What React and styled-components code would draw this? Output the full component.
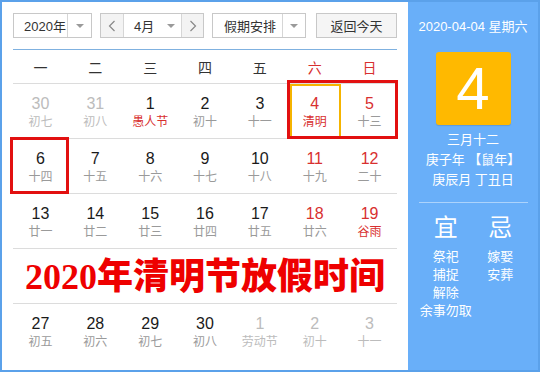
import React from "react";
import styled, { createGlobalStyle } from "styled-components";

const GlobalStyle = createGlobalStyle`
  html, body { margin: 0; padding: 0; width: 540px; height: 372px; overflow: hidden; background: #fff; }
  body { font-family: "Liberation Sans", "Noto Sans CJK SC", sans-serif; }
`;

const Frame = styled.div`
  width: 540px;
  height: 372px;
  box-sizing: border-box;
  border: 2px solid #5ba1ea;
  display: flex;
  background: #fff;
`;

const Main = styled.div`
  flex: 1;
  min-width: 0;
  padding: 11px 11px 0 11px;
`;

const Toolbar = styled.div`
  display: flex;
  height: 25px;
`;

const Box = styled.div`
  display: flex;
  box-sizing: border-box;
  border: 1px solid #c8c8c8;
  width: ${(p) => p.$w}px;
  margin-right: ${(p) => p.$mr || 0}px;
  background: ${(p) => p.$bg || "#fff"};
  justify-content: ${(p) => (p.$center ? "center" : "flex-start")};
  align-items: center;
  font-size: 13px;
  color: #333;
  white-space: nowrap;
`;

const Label = styled.div`
  flex: 1;
  min-width: 0;
  height: 100%;
  display: flex;
  align-items: center;
  padding-left: ${(p) => p.$pl}px;
  font-size: 13px;
  color: #333;
  white-space: nowrap;
`;

const Caret = styled.div`
  flex: none;
  width: ${(p) => p.$w}px;
  height: 100%;
  box-sizing: border-box;
  border-left: ${(p) => (p.$divider ? "1px solid #d6d6d6" : "none")};
  display: flex;
  align-items: center;
  justify-content: center;
`;

const Tri = styled.span`
  width: 0;
  height: 0;
  border-top: 4px solid #9a9a9a;
  border-left: 4px solid transparent;
  border-right: 4px solid transparent;
`;

const NavBtn = styled.div`
  flex: none;
  width: ${(p) => p.$w}px;
  height: 100%;
  box-sizing: border-box;
  background: #f3f3f3;
  border-left: ${(p) => (p.$side === "right" ? "1px solid #d6d6d6" : "none")};
  border-right: ${(p) => (p.$side === "left" ? "1px solid #d6d6d6" : "none")};
  display: flex;
  align-items: center;
  justify-content: center;
`;

const WeekHeader = styled.div`
  margin-top: 11px;
  height: 35px;
  box-sizing: border-box;
  border-top: 1px solid #7fb1e0;
  border-bottom: 1px solid #dcdcdc;
  display: grid;
  grid-template-columns: repeat(7, 1fr);
  align-items: center;
`;

const WeekName = styled.div`
  text-align: center;
  font-size: 14px;
  color: ${(p) => (p.$red ? "#d8302f" : "#333")};
`;

const Grid = styled.div`
  position: relative;
`;

const WeekRow = styled.div`
  display: grid;
  grid-template-columns: repeat(7, 1fr);
  height: 55px;
  box-sizing: border-box;
  border-bottom: ${(p) => (p.$last ? "none" : "1px solid #dcdcdc")};
`;

const Cell = styled.div`
  position: relative;
  display: flex;
  flex-direction: column;
  align-items: center;
  padding-top: 10px;
  &::after {
    content: "";
    display: ${(p) => (p.$today ? "block" : "none")};
    position: absolute;
    top: 0;
    bottom: -1px;
    left: 3px;
    right: 1px;
    border: 2px solid #f5b400;
  }
`;

const DayNum = styled.div`
  font-size: 16px;
  line-height: 20px;
  color: ${(p) => p.$color};
`;

const Lunar = styled.div`
  font-size: 12px;
  line-height: 16px;
  color: ${(p) => p.$color};
`;

const BannerRow = styled.div`
  height: 55px;
  box-sizing: border-box;
  border-bottom: 1px solid #dcdcdc;
  display: flex;
  align-items: center;
  justify-content: center;
`;

const BannerText = styled.div`
  font-family: "Liberation Serif", "Noto Sans CJK SC", serif;
  font-weight: 900;
  font-size: 36px;
  line-height: 40px;
  color: #ee0000;
  padding-top: 2px;
`;

const Mark = styled.div`
  position: absolute;
  left: ${(p) => p.$left};
  top: ${(p) => p.$top}px;
  width: ${(p) => p.$width};
  height: ${(p) => p.$height}px;
  box-sizing: border-box;
  border: 3px solid #e21010;
  pointer-events: none;
`;

const Side = styled.div`
  width: 130px;
  background: #69aff9;
  color: #fff;
  display: flex;
  flex-direction: column;
  align-items: center;
  padding-top: 15px;
  box-sizing: border-box;
`;

const DateLine = styled.div`
  font-size: 13px;
  line-height: 20px;
`;

const BigDay = styled.div`
  margin-top: 15px;
  width: 75px;
  height: 73px;
  background: #ffb900;
  border-radius: 3px;
  box-shadow: 0 1px 1px rgba(0, 0, 0, 0.12);
  display: flex;
  align-items: center;
  justify-content: center;
  font-size: 60px;
  line-height: 1;
  color: #fff;
`;

const LunarInfo = styled.div`
  margin-top: 5px;
  font-size: 13px;
  line-height: 20px;
  text-align: center;
`;

const Divider = styled.div`
  margin-top: 12px;
  width: 109px;
  height: 1px;
  background: rgba(255, 255, 255, 0.45);
`;

const YiJi = styled.div`
  margin-top: 10px;
  width: 109px;
  display: grid;
  grid-template-columns: 1fr 1fr;
`;

const YiCol = styled.div`
  display: flex;
  flex-direction: column;
  align-items: center;
`;

const YiHead = styled.div`
  font-size: 24px;
  line-height: 30px;
  margin-bottom: 5px;
`;

const YiItem = styled.div`
  font-size: 13px;
  line-height: 18px;
  white-space: nowrap;
`;

const Chevron = ({ dir }) => (
  <svg width="8" height="12" viewBox="0 0 8 12">
    <path
      d={dir === "left" ? "M6.5 1 L1.5 6 L6.5 11" : "M1.5 1 L6.5 6 L1.5 11"}
      fill="none"
      stroke="#888"
      strokeWidth="1.2"
    />
  </svg>
);

const C = { norm: "#1a1a1a", red: "#d8302f", gray: "#bcbcbc", lunar: "#9a9a9a" };

const mk = (n, l, o = {}) => ({ n, l, ...o });

const weeks = [
  [
    mk("30", "初七", { g: true }),
    mk("31", "初八", { g: true }),
    mk("1", "愚人节", { lr: true }),
    mk("2", "初十"),
    mk("3", "十一"),
    mk("4", "清明", { r: true, lr: true, today: true }),
    mk("5", "十三", { r: true }),
  ],
  [
    mk("6", "十四"),
    mk("7", "十五"),
    mk("8", "十六"),
    mk("9", "十七"),
    mk("10", "十八"),
    mk("11", "十九", { r: true }),
    mk("12", "二十", { r: true }),
  ],
  [
    mk("13", "廿一"),
    mk("14", "廿二"),
    mk("15", "廿三"),
    mk("16", "廿四"),
    mk("17", "廿五"),
    mk("18", "廿六", { r: true }),
    mk("19", "谷雨", { r: true, lr: true }),
  ],
  "banner",
  [
    mk("27", "初五"),
    mk("28", "初六"),
    mk("29", "初七"),
    mk("30", "初八"),
    mk("1", "劳动节", { g: true }),
    mk("2", "初十", { g: true }),
    mk("3", "十一", { g: true }),
  ],
];

const weekNames = ["一", "二", "三", "四", "五", "六", "日"];

export default function App() {
  return (
    <>
      <GlobalStyle />
      <Frame>
        <Main>
          <Toolbar>
            <Box $w={79} $mr={8}>
              <Label $pl={10}>2020年</Label>
              <Caret $w={24} $divider>
                <Tri />
              </Caret>
            </Box>
            <Box $w={104} $mr={8}>
              <NavBtn $w={23} $side="left">
                <Chevron dir="left" />
              </NavBtn>
              <Label $pl={10}>4月</Label>
              <Caret $w={20}>
                <Tri />
              </Caret>
              <NavBtn $w={22} $side="right">
                <Chevron dir="right" />
              </NavBtn>
            </Box>
            <Box $w={94} $mr={10}>
              <Label $pl={11}>假期安排</Label>
              <Caret $w={23} $divider>
                <Tri />
              </Caret>
            </Box>
            <Box $w={81} $bg="#f5f5f5" $center>
              返回今天
            </Box>
          </Toolbar>
          <WeekHeader>
            {weekNames.map((w, i) => (
              <WeekName key={w} $red={i >= 5}>
                {w}
              </WeekName>
            ))}
          </WeekHeader>
          <Grid>
            {weeks.map((wk, i) =>
              wk === "banner" ? (
                <BannerRow key="banner">
                  <BannerText>2020年清明节放假时间</BannerText>
                </BannerRow>
              ) : (
                <WeekRow key={i} $last={i === weeks.length - 1}>
                  {wk.map((d, j) => {
                    const numColor = d.g ? C.gray : d.r ? C.red : C.norm;
                    const lunColor = d.g ? C.gray : d.lr ? C.red : C.lunar;
                    return (
                      <Cell key={j} $today={d.today}>
                        <DayNum $color={numColor}>{d.n}</DayNum>
                        <Lunar $color={lunColor}>{d.l}</Lunar>
                      </Cell>
                    );
                  })}
                </WeekRow>
              )
            )}
            <Mark $left="calc(500% / 7)" $top={-4} $width="calc(200% / 7 + 1px)" $height={59} />
            <Mark $left="-3px" $top={53} $width="59px" $height={57} />
          </Grid>
        </Main>
        <Side>
          <DateLine>2020-04-04 星期六</DateLine>
          <BigDay>4</BigDay>
          <LunarInfo>
            三月十二
            <br />
            庚子年 【鼠年】
            <br />
            庚辰月 丁丑日
          </LunarInfo>
          <Divider />
          <YiJi>
            <YiCol>
              <YiHead>宜</YiHead>
              <YiItem>祭祀</YiItem>
              <YiItem>捕捉</YiItem>
              <YiItem>解除</YiItem>
              <YiItem>余事勿取</YiItem>
            </YiCol>
            <YiCol>
              <YiHead>忌</YiHead>
              <YiItem>嫁娶</YiItem>
              <YiItem>安葬</YiItem>
            </YiCol>
          </YiJi>
        </Side>
      </Frame>
    </>
  );
}
